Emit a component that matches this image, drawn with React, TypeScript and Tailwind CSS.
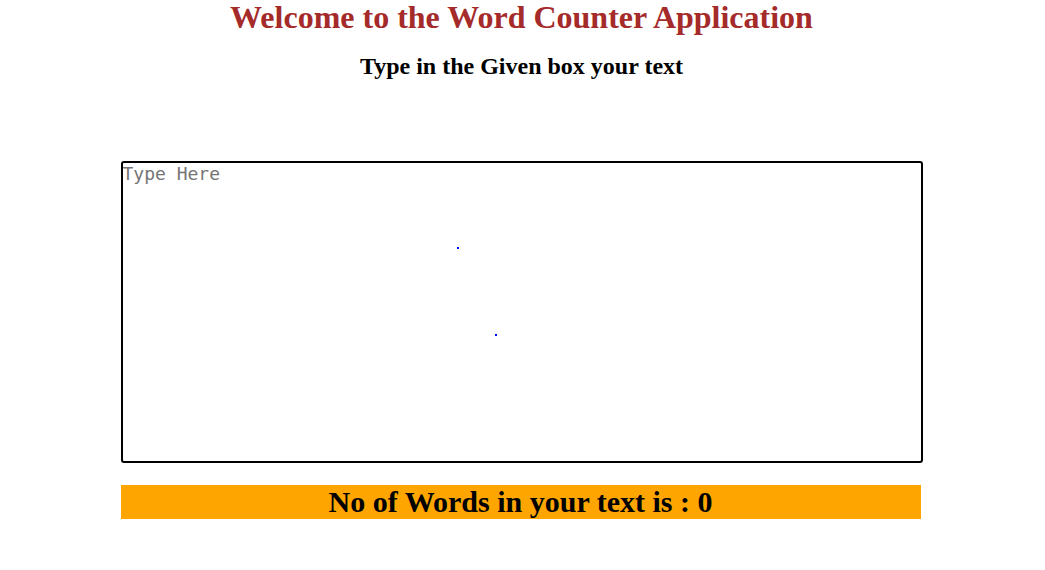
import React, { useState } from "react";

const App: React.FC = () => {
  const [text, setText] = useState("");

  const count = text.trim() ? text.trim().split(/\s+/).length : 0;

  return (
    <div className="w-full min-h-[570px] bg-white flex flex-col items-center pr-[2px] font-['Liberation_Serif',serif]">
      <h1 className="text-[32px] leading-[34px] font-bold text-[#a52a2a]">
        Welcome to the Word Counter Application
      </h1>
      <h2 className="text-[24px] leading-[28px] font-bold text-black mt-[18px]">
        Type in the Given box your text
      </h2>

      <div className="w-[802px] flex flex-col items-start mt-[81px]">
        <div className="relative">
          <textarea
            value={text}
            onChange={(e) => setText(e.target.value)}
            placeholder="Type Here"
            className="block w-[802px] h-[302px] border-2 border-black rounded-[3px] resize-none outline-none p-0 font-['DejaVu_Sans_Mono',monospace] text-[18px] leading-[22px] placeholder:text-[#757575]"
          />
          <span className="absolute left-[336px] top-[86px] w-[2px] h-[2px] bg-[#0000ff]" />
          <span className="absolute left-[374px] top-[173px] w-[2px] h-[2px] bg-[#0000ff]" />
        </div>

        <div className="mt-[22px] w-[800px] h-[34px] bg-[#ffa500] flex items-center justify-center">
          <span className="text-[30px] leading-[34px] font-bold text-black">
            No of Words in your text is : {count}
          </span>
        </div>
      </div>
    </div>
  );
};

export default App;
